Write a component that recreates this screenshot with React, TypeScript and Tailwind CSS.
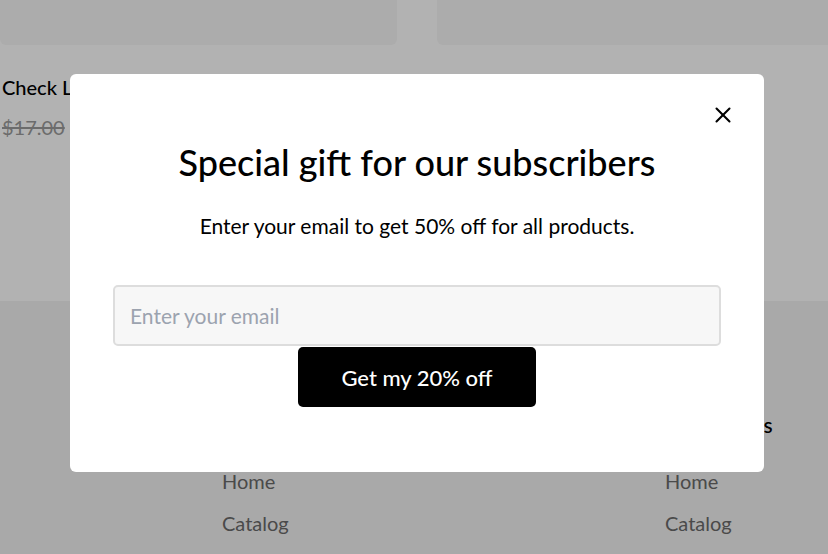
import { X } from "lucide-react";

// Newsletter popup shown over the storefront page.

const font = { fontFamily: "Lato, 'Noto Sans', sans-serif" };

function ProductCard({ title, price }: { title: string; price: string }) {
  return (
    <div className="w-[397px] shrink-0">
      <div className="h-[45px] rounded-b-md bg-[#f7f7f7]" />
      <h3 className="mt-[29px] pl-[2px] text-[20px] leading-[26px] font-medium text-black">{title}</h3>
      <p className="mt-[14px] pl-[2px] text-[20px] leading-[26px] text-[#9b9b9b] line-through">{price}</p>
    </div>
  );
}

function FooterColumn() {
  return (
    <div className="flex w-[443px] shrink-0 flex-col">
      <h4 className="whitespace-nowrap text-[21px] leading-[26px] tracking-[0.6px] font-medium text-black">Quick links</h4>
      <ul className="mt-[30px] flex flex-col gap-[16px] text-[20px] leading-[26px] text-[#6a6a6a]">
        <li>Home</li>
        <li>Catalog</li>
      </ul>
    </div>
  );
}

export default function App() {
  return (
    <div className="relative h-[554px] w-[828px] overflow-hidden bg-white" style={font}>
      <div className="flex h-[301px] gap-10 overflow-hidden">
        <ProductCard title="Check Linen Shirt" price="$17.00" />
        <ProductCard title="Linen Summer Dress" price="$24.00" />
      </div>
      <footer className="h-[253px] bg-[#f2f2f2] pt-[111px]">
        <div className="flex pl-[222px]">
          <FooterColumn />
          <FooterColumn />
        </div>
      </footer>

      <div className="absolute inset-0 bg-black/30 pl-[70px] pt-[74px]">
        <div className="relative flex h-[398px] w-[694px] flex-col items-center rounded-md bg-white px-[43px]">
          <button className="absolute right-[28px] top-[28px] text-black">
            <X size={26} strokeWidth={1.9} />
          </button>
          <h2 className="mt-[66px] text-[36px] leading-[44px] font-medium text-black">
            Special gift for our subscribers
          </h2>
          <p className="mt-[29px] text-[21px] leading-[26px] text-black">
            Enter your email to get 50% off for all products.
          </p>
          <input
            type="email"
            placeholder="Enter your email"
            className="mt-[46px] h-[61px] w-full rounded-[5px] border-2 border-[#dddddd] bg-[#f7f7f7] px-[15px] text-[21px] text-black placeholder:text-[#9ca3af] outline-none"
          />
          <button className="mt-px h-[60px] w-[238px] rounded-[5px] bg-black text-[22px] font-medium text-white">
            Get my 20% off
          </button>
        </div>
      </div>
    </div>
  );
}
